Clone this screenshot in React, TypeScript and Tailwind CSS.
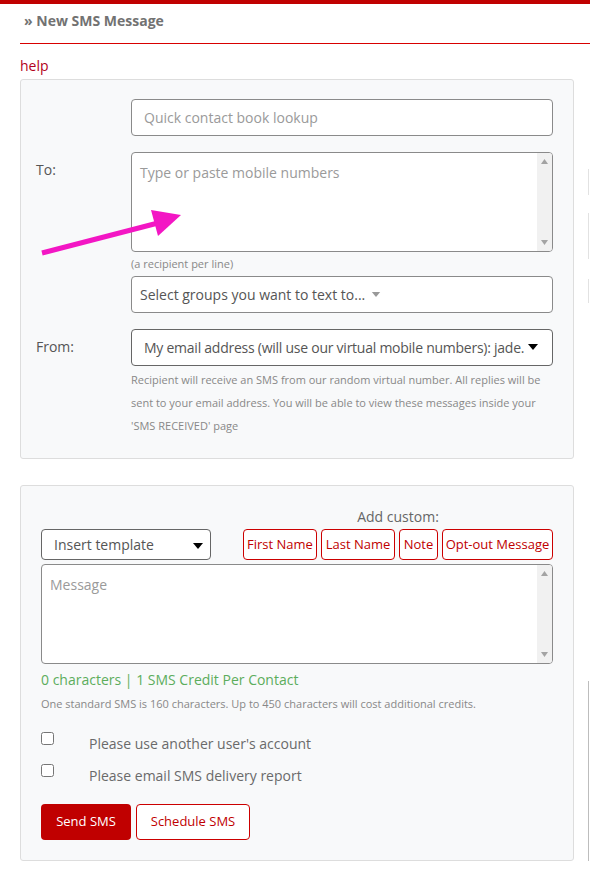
import { useState } from "react";

const font = { fontFamily: '"Open Sans", "Noto Sans", Arial, sans-serif' };
const inputBox = "block w-[422px] h-[37px] border border-[#8a8a8a] rounded-[4px] bg-white text-[14px] outline-none";
const customBtn = "h-[31px] border border-[#cc0000] rounded-[4px] bg-white text-[13px] text-[#c00000] leading-none";
const scrollArea =
  "block h-[100px] border border-[#8a8a8a] rounded-[4px] bg-white pl-2 pr-[22px] py-[10px] text-[14px] leading-[20px] resize-none overflow-y-auto outline-none placeholder:text-[#9a9a9a]";

const Caret = ({ className }: { className: string }) => (
  <svg className={className} viewBox="0 0 10 6" width="10" height="6">
    <path d="M0 0 L10 0 L5 6 Z" fill="currentColor" />
  </svg>
);

// the grey scrollbar strip shown inside the textareas
const ScrollStrip = () => (
  <div className="absolute right-[1px] top-[1px] bottom-[1px] w-[15px] rounded-r-[3px] bg-[#f1f1f1] flex flex-col justify-between items-center py-[6px] pointer-events-none">
    <svg width="7" height="5" viewBox="0 0 7 5">
      <path d="M0 5 L7 5 L3.5 0 Z" fill="#a3a3a3" />
    </svg>
    <svg width="7" height="5" viewBox="0 0 7 5">
      <path d="M0 0 L7 0 L3.5 5 Z" fill="#a3a3a3" />
    </svg>
  </div>
);

const App = () => {
  const [message, setMessage] = useState("");
  const [otherUser, setOtherUser] = useState(false);
  const [report, setReport] = useState(false);

  return (
    <div className="relative w-[590px] min-h-[876px] bg-white overflow-hidden" style={font}>
      <div className="h-[4px] bg-[#c00000]" />
      <h2 className="h-[39px] pt-[7px] pl-6 text-[14px] leading-[20px] font-bold text-[#727272]">» New SMS Message</h2>
      <div className="ml-5 border-t border-[#d80000]" />
      <div className="flex">
        <div className="w-[588px] pl-5">
          <a className="block mt-[12px] text-[14px] leading-[20px] text-[#b3001b]">help</a>

          {/* recipients */}
          <div className="mt-[3px] w-[554px] border border-[#dddddd] rounded-[3px] bg-[#f8f9fa] pt-[19px] pb-[21px] pl-[15px] pr-5">
            <div className="flex">
              <div className="w-[95px]" />
              <input className={inputBox + " px-3 placeholder:text-[#9a9a9a]"} placeholder="Quick contact book lookup" />
            </div>
            <div className="flex mt-[16px]">
              <label className="w-[95px] pt-[8px] text-[14px] leading-[20px] text-[#555]">To:</label>
              <div className="w-[422px]">
                <div className="relative">
                  <textarea className={scrollArea + " w-[422px]"} placeholder="Type or paste mobile numbers" />
                  <ScrollStrip />
                </div>
                <div className="mt-[4px] text-[11px] leading-[16px] text-[#888]">(a recipient per line)</div>
                <div className={inputBox + " mt-[4px] px-2 flex items-center text-[#555]"}>
                  <span>Select groups you want to text to...</span>
                  <Caret className="ml-[6px] w-[10px] h-[5px] text-[#999]" />
                </div>
              </div>
            </div>
            <div className="flex mt-[16px]">
              <label className="w-[95px] pt-[8px] text-[14px] leading-[20px] text-[#555]">From:</label>
              <div className="w-[422px]">
                <div className="relative">
                  <select className="block w-[422px] h-[37px] border border-[#666] rounded-[4px] bg-white pl-3 pr-[24px] text-[14px] tracking-[-0.25px] text-[#555] appearance-none outline-none">
                    <option>My email address (will use our virtual mobile numbers): jade.</option>
                  </select>
                  <Caret className="absolute right-[15px] top-[15px] w-[10px] h-[6px] text-black pointer-events-none" />
                </div>
                <p className="mt-[2px] text-[11px] leading-[23px] text-[#888]">
                  Recipient will receive an SMS from our random virtual number. All replies will be sent to your email address. You will be able to view these messages inside your 'SMS RECEIVED' page
                </p>
              </div>
            </div>
          </div>

          {/* message */}
          <div className="mt-[26px] w-[554px] border border-[#dddddd] rounded-[3px] bg-[#f8f9fa] pt-[21px] pb-5 px-5">
            <div className="flex justify-between items-end">
              <div className="relative">
                <select className="block w-[170px] h-[31px] border border-[#666] rounded-[4px] bg-white pl-3 pr-8 text-[14px] text-[#555] appearance-none outline-none">
                  <option>Insert template</option>
                </select>
                <Caret className="absolute right-[8px] top-[14px] w-[10px] h-[6px] text-black pointer-events-none" />
              </div>
              <div className="flex flex-col items-center">
                <div className="mb-[2px] text-[14px] leading-[20px] text-[#666]">Add custom:</div>
                <div className="flex gap-[4px]">
                  <button className={customBtn + " w-[74px]"}>First Name</button>
                  <button className={customBtn + " w-[74px]"}>Last Name</button>
                  <button className={customBtn + " w-[39px]"}>Note</button>
                  <button className={customBtn + " w-[111px]"}>Opt-out Message</button>
                </div>
              </div>
            </div>
            <div className="relative mt-[4px]">
              <textarea
                value={message}
                onChange={(e) => setMessage(e.target.value)}
                className={scrollArea + " w-[512px]"}
                placeholder="Message"
              />
              <ScrollStrip />
            </div>
            <div className="mt-[6px] text-[14px] leading-[20px] text-[#5cad5c]">
              {message.length} characters | 1 SMS Credit Per Contact
            </div>
            <div className="mt-[6px] text-[11px] leading-[16px] text-[#888]">
              One standard SMS is 160 characters. Up to 450 characters will cost additional credits.
            </div>
            <label className="mt-[22px] flex items-start">
              <span className="w-[48px] -mt-[2px]">
                <input type="checkbox" checked={otherUser} onChange={() => setOtherUser(!otherUser)} className="m-0 block w-[13px] h-[13px]" />
              </span>
              <span className="text-[14px] leading-[20px] text-[#6a6a6a]">Please use another user's account</span>
            </label>
            <label className="mt-[12px] flex items-start">
              <span className="w-[48px] -mt-[2px]">
                <input type="checkbox" checked={report} onChange={() => setReport(!report)} className="m-0 block w-[13px] h-[13px]" />
              </span>
              <span className="text-[14px] leading-[20px] text-[#6a6a6a]">Please email SMS delivery report</span>
            </label>
            <div className="mt-[18px] flex gap-[5px]">
              <button className="w-[90px] h-[36px] rounded-[4px] bg-[#c00000] text-white text-[13px]">Send SMS</button>
              <button className="w-[114px] h-[36px] rounded-[4px] border border-[#cc0000] bg-white text-[#c00000] text-[13px]">Schedule SMS</button>
            </div>
          </div>
        </div>

        {/* edge of the neighbouring column */}
        <div className="w-[2px] flex flex-col">
          <div className="h-[125px]" />
          <div className="h-[26px] border-l border-[#e2e2e2]" />
          <div className="h-[18px]" />
          <div className="h-[46px] border-l border-[#e2e2e2]" />
          <div className="h-[20px]" />
          <div className="h-[24px] border-l border-[#e2e2e2]" />
          <div className="h-[378px]" />
          <div className="flex-1 border-l border-[#bdbdbd]" />
        </div>
      </div>

      {/* pointer drawn over the form */}
      <svg className="absolute left-0 top-0 pointer-events-none" width="200" height="260" viewBox="0 0 200 260">
        <line x1="42" y1="253" x2="158" y2="223" stroke="#f316c4" strokeWidth="5" />
        <polygon points="181,215 151,210 158,236" fill="#f316c4" />
      </svg>
    </div>
  );
};

export default App;
